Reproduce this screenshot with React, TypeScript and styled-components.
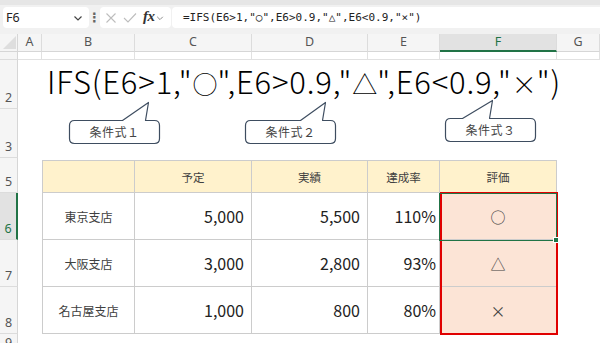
import React from 'react'
import styled, { createGlobalStyle } from 'styled-components'

const GlobalStyle = createGlobalStyle`
  html, body {
    margin: 0;
    padding: 0;
    background: #fff;
  }
  body {
    font-family: "Noto Sans CJK JP", "Noto Sans", sans-serif;
  }
`

const Page = styled.div`
  width: 600px;
  height: 343px;
  overflow: hidden;
  background: #fff;
  display: flex;
  flex-direction: column;
`

/* ---------- formula bar ---------- */

const FormulaBar = styled.div`
  height: 34px;
  box-sizing: border-box;
  flex-shrink: 0;
  background: #f1f1f1;
  border-top: 5px solid #e6e6e6;
  padding: 2px 0 0 3px;
  display: flex;
  align-items: flex-start;
`

const FieldBox = styled.div<{ $width?: number; $grow?: boolean }>`
  height: 21px;
  width: ${(p) => (p.$width ? `${p.$width}px` : 'auto')};
  flex: ${(p) => (p.$grow ? '1' : '0 0 auto')};
  box-sizing: border-box;
  background: #fff;
  border-radius: 4px;
  display: flex;
  align-items: center;
`

const NameText = styled.span`
  flex: 1;
  padding-left: 3px;
  font-family: "Noto Sans", sans-serif;
  font-size: 12.5px;
  color: #222;
`

const Dots = styled.div`
  width: 11px;
  height: 21px;
  display: flex;
  align-items: center;
  justify-content: center;
  color: #666;
  font-size: 13px;
  font-weight: bold;
  font-family: "DejaVu Sans", sans-serif;
`

const FxText = styled.span`
  font-family: "Liberation Serif", serif;
  font-style: italic;
  font-weight: bold;
  font-size: 15px;
  color: #333;
  margin: 0 1px 2px 6px;
  letter-spacing: -0.5px;
`

const FormulaInput = styled.span`
  padding-left: 11px;
  font-family: "DejaVu Sans Mono", "Noto Sans CJK JP", monospace;
  font-size: 11px;
  color: #222;
  white-space: pre;
`

const Chevron = ({ size = 9, color = '#555' }: { size?: number; color?: string }) => (
  <svg width={size} height={size} viewBox="0 0 10 10" style={{ marginRight: 6 }}>
    <polyline points="1.5,3.5 5,7 8.5,3.5" fill="none" stroke={color} strokeWidth="1.2" />
  </svg>
)

const CrossIcon = () => (
  <svg width="12" height="12" viewBox="0 0 12 12" style={{ marginLeft: 5 }}>
    <path d="M1.5 1.5 L10.5 10.5 M10.5 1.5 L1.5 10.5" stroke="#bdbdbd" strokeWidth="1.1" />
  </svg>
)

const CheckIcon = () => (
  <svg width="14" height="12" viewBox="0 0 14 12" style={{ marginLeft: 6 }}>
    <polyline points="1,6 5,10 13,1.5" fill="none" stroke="#bdbdbd" strokeWidth="1.1" />
  </svg>
)

/* ---------- sheet grid ---------- */

const Sheet = styled.div`
  display: grid;
  grid-template-columns: 18px 24px 93px 117px 116px 72px 117px 43px;
  grid-template-rows: 18px 8px 49px 49px 2px 33px 47px 47px 47px 20px;
`

const Corner = styled.div`
  grid-column: 1;
  grid-row: 1;
  background: #f5f5f5;
  border-right: 1px solid #d6d6d6;
  border-bottom: 1px solid #d6d6d6;
  box-sizing: border-box;
  display: flex;
  align-items: flex-end;
  justify-content: flex-end;
  padding: 0 1px 2px 0;
`

const CornerTriangle = styled.div`
  width: 0;
  height: 0;
  border-left: 13px solid transparent;
  border-bottom: 13px solid #dedede;
`

const ColHead = styled.div<{ $col: number; $active?: boolean }>`
  grid-column: ${(p) => p.$col};
  grid-row: 1;
  box-sizing: border-box;
  background: ${(p) => (p.$active ? '#e2e2e2' : '#f5f5f5')};
  border-right: 1px solid #dcdcdc;
  border-bottom: ${(p) => (p.$active ? '2px solid #217346' : '1px solid #d6d6d6')};
  color: ${(p) => (p.$active ? '#217346' : '#555')};
  font-family: "Noto Sans", sans-serif;
  font-size: 12.5px;
  display: flex;
  align-items: center;
  justify-content: center;
  line-height: 1;
`

const RowHead = styled.div<{ $row: number; $active?: boolean }>`
  grid-row: ${(p) => p.$row};
  grid-column: 1;
  box-sizing: border-box;
  overflow: hidden;
  background: ${(p) => (p.$active ? '#e2e2e2' : '#f5f5f5')};
  border-bottom: 1px solid #dcdcdc;
  border-right: ${(p) => (p.$active ? '2px solid #217346' : '1px solid #d6d6d6')};
  color: ${(p) => (p.$active ? '#217346' : '#555')};
  font-family: "Noto Sans", sans-serif;
  font-size: 12.5px;
  line-height: 14px;
  display: flex;
  align-items: flex-end;
  justify-content: center;
  padding-bottom: 3px;
`

const GridCell = styled.div<{ $col: number; $row: number }>`
  grid-column: ${(p) => p.$col};
  grid-row: ${(p) => p.$row};
  box-sizing: border-box;
  border-right: 1px solid #e1e1e1;
  border-bottom: 1px solid #e1e1e1;
`

const BigFormula = styled.div`
  grid-column: 2 / -1;
  grid-row: 3;
  padding-left: 29px;
  margin-top: -4px;
  font-family: "Noto Sans CJK JP", sans-serif;
  font-weight: 300;
  font-size: 31px;
  letter-spacing: 0.8px;
  line-height: 49px;
  color: #000;
  white-space: pre;
`

const Sym = styled.span`
  font-size: 25px;
  letter-spacing: 0;
`

const CalloutRow = styled.div`
  grid-column: 2 / -1;
  grid-row: 4;
  display: flex;
  align-items: flex-start;
`

const CalloutBox = styled.div<{ $left: number; $top: number }>`
  position: relative;
  width: 91px;
  height: 23px;
  margin-left: ${(p) => p.$left}px;
  margin-top: ${(p) => p.$top}px;
  flex-shrink: 0;
  display: flex;
  align-items: center;
  justify-content: center;
`

const CalloutShape = styled.svg`
  position: absolute;
  left: -1px;
  top: -21px;
  overflow: visible;
`

const CalloutLabel = styled.span`
  position: relative;
  font-family: "Noto Sans CJK JP", sans-serif;
  font-size: 12px;
  color: #444;
  letter-spacing: 0.5px;
`

const calloutPath = (w: number, h: number, r: number, baseL: number, baseR: number, tipX: number, tipY: number) =>
  `M${r},0 H${baseL} L${tipX},${tipY} L${baseR},0 H${w - r} Q${w},0 ${w},${r} V${h - r} Q${w},${h} ${w - r},${h} H${r} Q0,${h} 0,${h - r} V${r} Q0,0 ${r},0 Z`

interface CalloutProps {
  label: string
  left: number
  top: number
  baseL: number
  baseR: number
  tipX: number
}

const Callout = ({ label, left, top, baseL, baseR, tipX }: CalloutProps) => (
  <CalloutBox $left={left} $top={top}>
    <CalloutShape width="93" height="45">
      <path
        d={calloutPath(90, 23, 5, baseL, baseR, tipX, -18)}
        transform="translate(1.5 21.5)"
        fill="#fff"
        stroke="#3e4d60"
        strokeWidth="1.2"
        strokeLinejoin="round"
      />
    </CalloutShape>
    <CalloutLabel>{label}</CalloutLabel>
  </CalloutBox>
)

const TableCell = styled.div<{
  $col: number
  $row: number
  $head?: boolean
  $first?: boolean
  $align?: 'center' | 'right'
  $pad?: number
  $fill?: boolean
  $size?: number
}>`
  grid-column: ${(p) => p.$col};
  grid-row: ${(p) => p.$row};
  box-sizing: border-box;
  background: ${(p) => (p.$head ? '#fff2cc' : p.$fill ? '#fce4d6' : '#fff')};
  border-right: 1px solid #cccccc;
  border-bottom: 1px solid #cccccc;
  border-left: ${(p) => (p.$first ? '1px solid #cccccc' : 'none')};
  border-top: ${(p) => (p.$head ? '1px solid #cccccc' : 'none')};
  display: flex;
  align-items: center;
  justify-content: ${(p) => (p.$align === 'right' ? 'flex-end' : 'center')};
  padding-right: ${(p) => p.$pad ?? 0}px;
  font-family: "Noto Sans CJK JP", sans-serif;
  font-size: ${(p) => p.$size ?? 12}px;
  color: ${(p) => (p.$align === 'right' ? '#222' : '#404040')};
`

const SelectBox = styled.div`
  grid-column: 7;
  grid-row: 7;
  position: relative;
  margin: 0 0 -1px -1px;
  border: 1px solid #217346;
  pointer-events: none;
`

const Handle = styled.div`
  position: absolute;
  right: -3px;
  bottom: -3px;
  width: 4px;
  height: 4px;
  background: #217346;
  border: 1px solid #fff;
`

const RedFrame = styled.div`
  grid-column: 7;
  grid-row: 7 / 10;
  margin: -1px -1px -1px 0;
  border: 2px solid #e00000;
  pointer-events: none;
`

const columns = ['A', 'B', 'C', 'D', 'E', 'F', 'G']
// rows 1 and 4 are too short to show their numbers
const rowNumbers = [1, 2, 3, 4, 5, 6, 7, 8, 9]
const hiddenLabels = [1, 4]

const headers = ['', '予定', '実績', '達成率', '評価']

const branches = [
  { name: '東京支店', plan: '5,000', actual: '5,500', rate: '110%', mark: '○' },
  { name: '大阪支店', plan: '3,000', actual: '2,800', rate: '93%', mark: '△' },
  { name: '名古屋支店', plan: '1,000', actual: '800', rate: '80%', mark: '×' },
]

const App = () => {
  return (
    <Page>
      <GlobalStyle />
      <FormulaBar>
        <FieldBox $width={86}>
          <NameText>F6</NameText>
          <Chevron size={10} color="#444" />
        </FieldBox>
        <Dots>⋮</Dots>
        <FieldBox $width={71}>
          <CrossIcon />
          <CheckIcon />
          <FxText>fx</FxText>
          <Chevron size={8} color="#888" />
        </FieldBox>
        <FieldBox $grow style={{ marginLeft: 1, borderRadius: '4px 0 0 4px' }}>
          <FormulaInput>=IFS(E6&gt;1,"○",E6&gt;0.9,"△",E6&lt;0.9,"×")</FormulaInput>
        </FieldBox>
      </FormulaBar>

      <Sheet>
        <Corner>
          <CornerTriangle />
        </Corner>
        {columns.map((c, i) => (
          <ColHead key={c} $col={i + 2} $active={c === 'F'}>
            {c}
          </ColHead>
        ))}
        {rowNumbers.map((n) => (
          <RowHead key={n} $row={n + 1} $active={n === 6}>
            {hiddenLabels.includes(n) ? '' : n}
          </RowHead>
        ))}

        {/* row 1 keeps its gridlines */}
        {columns.map((c, i) => (
          <GridCell key={`r1-${c}`} $col={i + 2} $row={2} />
        ))}

        <BigFormula>
          IFS(E6&gt;1,"<Sym>○</Sym>",E6&gt;0.9,"<Sym>△</Sym>",E6&lt;0.9,"<Sym>×</Sym>")
        </BigFormula>

        <CalloutRow>
          <Callout label="条件式１" left={51} top={11} baseL={53} baseR={76} tipX={79} />
          <Callout label="条件式２" left={85} top={11} baseL={55} baseR={77} tipX={80} />
          <Callout label="条件式３" left={109} top={9} baseL={17} baseR={44} tipX={47} />
        </CalloutRow>

        {headers.map((h, i) => (
          <TableCell key={`h${i}`} $col={i + 3} $row={6} $head $first={i === 0} $size={11.5}>
            {h}
          </TableCell>
        ))}

        {branches.map((b, i) => {
          const row = 7 + i
          return (
            <React.Fragment key={b.name}>
              <TableCell $col={3} $row={row} $first>
                {b.name}
              </TableCell>
              <TableCell $col={4} $row={row} $align="right" $pad={7} $size={16}>
                {b.plan}
              </TableCell>
              <TableCell $col={5} $row={row} $align="right" $pad={7} $size={16}>
                {b.actual}
              </TableCell>
              <TableCell $col={6} $row={row} $align="right" $pad={3} $size={16}>
                {b.rate}
              </TableCell>
              <TableCell $col={7} $row={row} $fill $size={15}>
                {b.mark}
              </TableCell>
            </React.Fragment>
          )
        })}

        <SelectBox>
          <Handle />
        </SelectBox>
        <RedFrame />
      </Sheet>
    </Page>
  )
}

export default App
